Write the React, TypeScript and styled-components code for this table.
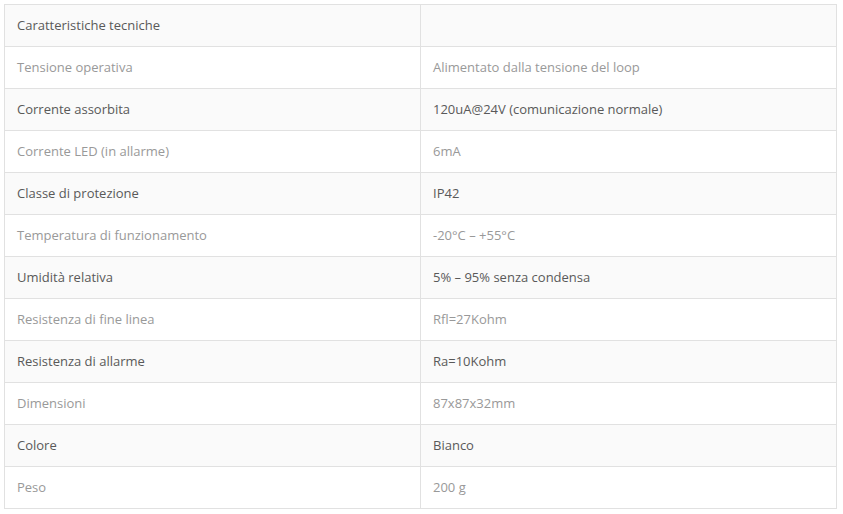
import { createGlobalStyle } from "styled-components";
import styled from "styled-components";

const GlobalStyle = createGlobalStyle`
  body {
    margin: 0;
    background: #fff;
    font-family: "Open Sans", "Liberation Sans", sans-serif;
  }
`;

const Wrapper = styled.div`
  padding: 4px 6px 0 4px;
`;

const Table = styled.table`
  width: 833px;
  border-collapse: collapse;
  border: 1px solid #e1e1e1;
  font-size: 13px;
  table-layout: fixed;
`;

const Row = styled.tr<{ $striped: boolean }>`
  background: ${(p) => (p.$striped ? "#fafafa" : "#fff")};
  color: ${(p) => (p.$striped ? "#595959" : "#999")};
`;

const Cell = styled.td`
  height: 42px;
  box-sizing: border-box;
  padding: 0 12px 2px;
  border: 1px solid #e1e1e1;
  vertical-align: middle;
  line-height: 20px;
`;

const specs: [string, string][] = [
  ["Caratteristiche tecniche", ""],
  ["Tensione operativa", "Alimentato dalla tensione del loop"],
  ["Corrente assorbita", "120uA@24V (comunicazione normale)"],
  ["Corrente LED (in allarme)", "6mA"],
  ["Classe di protezione", "IP42"],
  ["Temperatura di funzionamento", "-20°C – +55°C"],
  ["Umidità relativa", "5% – 95% senza condensa"],
  ["Resistenza di fine linea", "Rfl=27Kohm"],
  ["Resistenza di allarme", "Ra=10Kohm"],
  ["Dimensioni", "87x87x32mm"],
  ["Colore", "Bianco"],
  ["Peso", "200 g"],
];

export default function App() {
  return (
    <Wrapper>
      <GlobalStyle />
      <Table>
        <colgroup>
          <col style={{ width: 416 }} />
          <col />
        </colgroup>
        <tbody>
          {specs.map(([label, value], i) => (
            <Row key={label} $striped={i % 2 === 0}>
              <Cell>{label}</Cell>
              <Cell>{value}</Cell>
            </Row>
          ))}
        </tbody>
      </Table>
    </Wrapper>
  );
}
